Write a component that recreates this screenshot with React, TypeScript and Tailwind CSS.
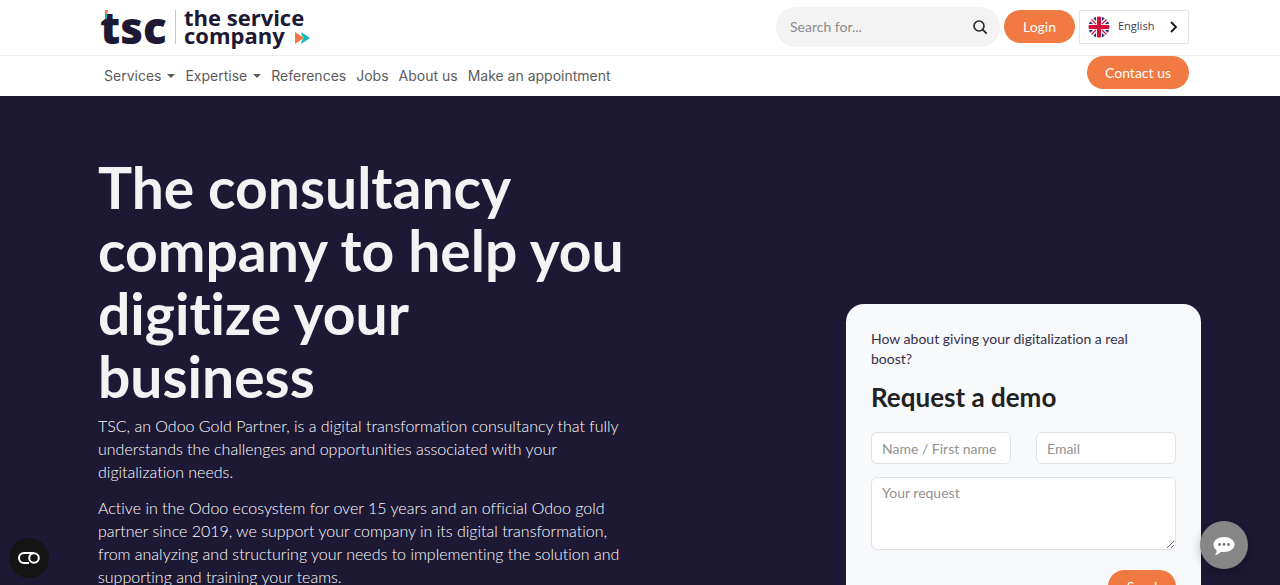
import type { ReactNode } from 'react'

const menuItems = [
  { label: 'Services', hasMenu: true },
  { label: 'Expertise', hasMenu: true },
  { label: 'References', hasMenu: false },
  { label: 'Jobs', hasMenu: false },
  { label: 'About us', hasMenu: false },
  { label: 'Make an appointment', hasMenu: false },
]

const fieldClass =
  'w-full min-w-0 rounded-md border border-[#dee2e6] bg-white px-[10px] text-[14px] leading-[22px] text-[#1d1834] placeholder:text-[#929292]'

function PillButton({
  children,
  className = '',
  type = 'button',
}: {
  children: ReactNode
  className?: string
  type?: 'button' | 'submit'
}) {
  return (
    <button
      type={type}
      className={`shrink-0 rounded-full bg-[#f07a42] text-[14px] leading-5 text-white transition hover:bg-[#e26b32] ${className}`}
    >
      {children}
    </button>
  )
}

function Logo() {
  return (
    <svg
      viewBox="0 0 212 56"
      className="h-14 w-[212px] overflow-visible"
      role="img"
      aria-label="tsc, the service company"
      fontFamily="Open Sans, sans-serif"
      fontWeight="800"
      fill="#1d1834"
    >
      <text x="-1" y="45" fontSize="44">
        tsc
      </text>
      <path d="M4 11h3l-1 5H4Z" fill="#f07a42" />
      <path d="M4 15h2v5H4Z" fill="#16b5bd" />
      <path d="M74.500 11v34" stroke="#c5c5cf" />
      <g fontSize="22" fontWeight="700">
        <text x="83" y="27">
          the service
        </text>
        <text x="83" y="45">
          company
        </text>
      </g>
      <path d="m194 33 9 6-9 6Z" fill="#f07a42" />
      <path d="m200 33 9 6-9 6 1-4 2-2-2-2Z" fill="#16b5bd" />
    </svg>
  )
}

function UkFlag() {
  return (
    <svg viewBox="0 0 22 22" className="size-[22px] shrink-0" aria-hidden="true">
      <clipPath id="flag">
        <circle cx="11" cy="11" r="10.500" />
      </clipPath>
      <g clipPath="url(#flag)">
        <path d="M0 0h22v22H0Z" fill="#f2f2f5" />
        <path
          d="M8 0v5L3 0ZM14 0v5l5-5ZM0 3l5 5H0ZM22 3l-5 5h5ZM0 19l5-5H0ZM22 19l-5-5h5ZM8 22v-5l-5 5ZM14 22v-5l5 5Z"
          fill="#29337a"
        />
        <path
          d="m1 1 7 7M21 1l-7 7M1 21l7-7M21 21l-7-7"
          stroke="#d8173b"
          strokeWidth="1.200"
        />
        <path d="M9 0h4v9h9v4h-9v9H9v-9H0V9h9Z" fill="#d0103a" />
      </g>
    </svg>
  )
}

function Header() {
  return (
    <header className="bg-white">
      <div className="flex h-14 items-center justify-between border-b border-[#ececec] pr-[91px] pb-0.5 pl-[101px]">
        <a href="#">
          <Logo />
        </a>

        <div className="flex items-center gap-1">
          <form className="flex h-10 w-56 items-center rounded-full bg-[#f3f3f3] pr-3 pl-[14px]">
            <input
              type="search"
              aria-label="Search"
              placeholder="Search for..."
              className="min-w-0 flex-1 bg-transparent text-[14px] leading-5 placeholder:text-[#8c8c8c]"
            />
            <button type="submit" aria-label="Submit search" className="text-[#212529]">
              <svg viewBox="0 0 16 16" className="size-4" fill="none" aria-hidden="true">
                <circle cx="7" cy="7" r="5" stroke="currentColor" strokeWidth="1.600" />
                <path d="m10.700 10.700 4 4" stroke="currentColor" strokeWidth="1.800" />
              </svg>
            </button>
          </form>
          <PillButton className="h-[33px] w-[71px]">Login</PillButton>
          <label className="flex h-[34px] w-[110px] items-center border border-[#e5e5e5] bg-white pr-[10px] pl-2">
            <UkFlag />
            <select
              aria-label="Language"
              defaultValue="en"
              className="ml-2 min-w-0 flex-1 appearance-none bg-transparent font-['Open_Sans',sans-serif] text-[11px] text-[#3d3a55]"
            >
              <option value="en">English</option>
              <option value="fr">Français</option>
            </select>
            <svg viewBox="0 0 8 12" className="h-3 w-2" fill="none" aria-hidden="true">
              <path d="m1 1 5 5-5 5" stroke="#111" strokeWidth="1.800" />
            </svg>
          </label>
        </div>
      </div>

      <div className="flex h-10 items-start justify-between pr-[91px] pl-[104px]">
        <nav className="flex h-10 items-center gap-[10px] font-[Inter,sans-serif] text-[14px] leading-5 text-[#5c5c5c]">
          {menuItems.map(({ label, hasMenu }) =>
            hasMenu ? (
              <button key={label} type="button" className="flex items-center gap-[6px]">
                {label}
                <svg viewBox="0 0 8 4" className="h-1 w-2" fill="currentColor" aria-hidden="true">
                  <path d="M0 0h8L4 4Z" />
                </svg>
              </button>
            ) : (
              <a key={label} href="#">
                {label}
              </a>
            ),
          )}
        </nav>
        <PillButton className="h-[33px] w-[102px]">Contact us</PillButton>
      </div>
    </header>
  )
}

function DemoForm() {
  return (
    <form className="w-[355px] shrink-0 rounded-[18px] bg-[#f8f9fb] p-[25px]">
      <p className="text-[14px] leading-5 text-[#35304a]">
        How about giving your digitalization a real
        <br />
        boost?
      </p>
      <h2 className="mt-3 text-[26px] leading-8 font-bold text-[#212121]">Request a demo</h2>
      <div className="mt-[19px] grid grid-cols-2 gap-[25px]">
        <input
          type="text"
          aria-label="Name / First name"
          placeholder="Name / First name"
          className={`${fieldClass} h-8`}
        />
        <input type="email" aria-label="Email" placeholder="Email" className={`${fieldClass} h-8`} />
      </div>
      <textarea
        aria-label="Your request"
        placeholder="Your request"
        className={`${fieldClass} mt-[13px] block h-[73px] resize py-1`}
      />
      <div className="mt-5 flex justify-end">
        <PillButton type="submit" className="h-[33px] w-[68px]">
          Send
        </PillButton>
      </div>
    </form>
  )
}

export default function App() {
  return (
    <div className="flex h-screen flex-col overflow-hidden font-[Lato,sans-serif] [font-variant-ligatures:no-common-ligatures]">
      <Header />

      <main className="flex flex-1 items-start justify-between bg-[#1d1834] pr-[79px] pl-[98px]">
        <section className="pt-[60px]">
          <h1 className="text-[57px] leading-[63px] font-bold text-[#f3f3f3]">
            The consultancy
            <br />
            company to help you
            <br />
            digitize your
            <br />
            business
          </h1>
          <div className="mt-[6px] space-y-[13px] text-[16px] leading-[23px] font-light text-white">
            <p>
              TSC, an Odoo Gold Partner, is a digital transformation consultancy that fully
              <br />
              understands the challenges and opportunities associated with your
              <br />
              digitalization needs.
            </p>
            <p>
              Active in the Odoo ecosystem for over 15 years and an official Odoo gold
              <br />
              partner since 2019, we support your company in its digital transformation,
              <br />
              from analyzing and structuring your needs to implementing the solution and
              <br />
              supporting and training your teams.
            </p>
          </div>
        </section>

        <div className="pt-52">
          <DemoForm />
        </div>
      </main>

      <button
        type="button"
        aria-label="Cookie settings"
        className="fixed bottom-[7px] left-[9px] grid size-10 place-items-center rounded-full bg-[#141414] text-white"
      >
        <svg viewBox="0 0 22 12" className="h-3 w-[22px]" fill="none" aria-hidden="true">
          <path
            d="M16 1H6a5 5 0 0 0 0 10h5"
            stroke="currentColor"
            strokeWidth="2"
          />
          <circle cx="16" cy="6" r="4.800" stroke="currentColor" strokeWidth="2" />
        </svg>
      </button>
      <button
        type="button"
        aria-label="Open chat"
        className="fixed right-8 bottom-4 grid size-12 place-items-center rounded-full bg-[#868686] shadow-[0_3px_10px_rgba(0,0,0,0.25)]"
      >
        <svg viewBox="0 0 22 20" className="h-5 w-[22px]" aria-hidden="true">
          <path
            d="M11 2c6 0 10.500 3.200 10.500 7.500S17 17 11 17c-1 0-2 0-3-.300C6.500 18.500 4.500 19.700 2 20c1-1.200 1.600-2.700 1.600-4.800C1.600 13.900.5 11.900.5 9.500.5 5.200 5 2 11 2Z"
            fill="white"
          />
          <circle cx="6.500" cy="9.500" r="1.400" fill="#777" />
          <circle cx="11" cy="9.500" r="1.400" fill="#777" />
          <circle cx="15.500" cy="9.500" r="1.400" fill="#777" />
        </svg>
      </button>
    </div>
  )
}
